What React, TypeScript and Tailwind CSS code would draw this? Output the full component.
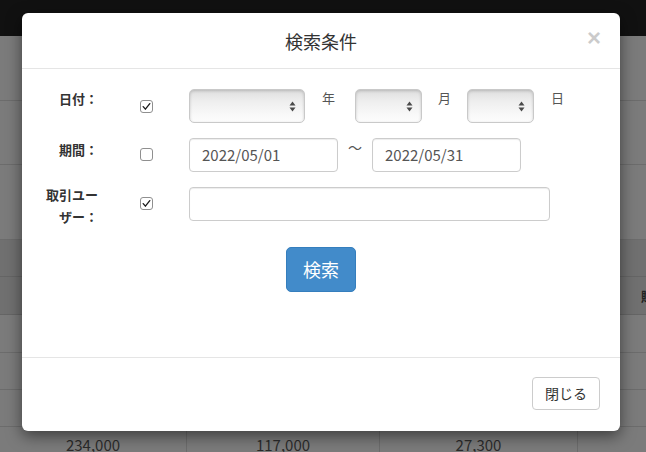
import React from "react";

function Checkbox({ checked }: { checked: boolean }) {
  return (
    <div className="w-[13px] h-[13px] rounded-[3px] border border-[#8f8f8f] bg-white flex items-center justify-center">
      {checked && (
        <svg width="11" height="11" viewBox="0 0 11 11">
          <path d="M2.2 5.6 L4.4 8.2 L8.8 2.6" fill="none" stroke="#1a1a1a" strokeWidth="1.3" strokeLinecap="round" strokeLinejoin="round" />
        </svg>
      )}
    </div>
  );
}

function FakeSelect({ w }: { w: string }) {
  return (
    <div
      className={`${w} relative h-[34px] rounded-[5px] border border-[#c9c9c9] bg-[linear-gradient(to_bottom,#dedede,#eeeeee_35%,#f8f8f8_75%,#fcfcfc)] shadow-[inset_0_1px_3px_rgba(0,0,0,0.18)]`}
    >
      <svg className="absolute right-[8px] top-[11px]" width="7" height="11" viewBox="0 0 7 11">
        <path d="M3.5 0.5 L6.5 4.5 L0.5 4.5 Z" fill="#4a4a4a" />
        <path d="M3.5 10.5 L6.5 6.5 L0.5 6.5 Z" fill="#4a4a4a" />
      </svg>
    </div>
  );
}

function TextInput({ w, value }: { w: string; value?: string }) {
  return (
    <div
      className={`${w} h-[34px] rounded-[4px] border border-[#cccccc] bg-white shadow-[inset_0_1px_1px_rgba(0,0,0,0.075)] flex items-center pl-[12px] text-[15px] text-[#555555]`}
    >
      {value}
    </div>
  );
}

export default function App() {
  return (
    <div className="relative w-[646px] h-[452px] overflow-hidden bg-[#7b7b7b] font-['Noto_Sans_CJK_JP','Noto_Sans',sans-serif]">
      {/* background page under overlay */}
      <div className="h-[36px] bg-[#111111]" />
      <div className="h-[65px] border-b border-[#6c6c6c]" />
      <div className="h-[64px] border-b border-[#6c6c6c]" />
      <div className="h-[75px] border-b border-[#6c6c6c]" />
      <div className="bg-[#707070]">
        <div className="h-[37px] border-b border-[#656565]" />
        <div className="h-[38px] border-b border-[#656565] grid grid-cols-[187px_193px_198px_1fr]">
          <div />
          <div />
          <div />
          <div className="pl-[63px] pt-[11px] text-[13px] font-bold leading-[16px] text-[#222] whitespace-nowrap">賦課</div>
        </div>
      </div>
      <div className="h-[38px] border-b border-[#6c6c6c]" />
      <div className="h-[37px] border-b border-[#6c6c6c]" />
      <div className="h-[37px] border-b border-[#6c6c6c]" />
      <div className="h-[40px] grid grid-cols-[187px_193px_198px_1fr] text-[15px] text-[#2b2b2b]">
        <div className="border-r border-[#6c6c6c] flex justify-center pt-[7px]">234,000</div>
        <div className="border-r border-[#6c6c6c] flex justify-center pt-[7px]">117,000</div>
        <div className="border-r border-[#6c6c6c] flex justify-center pt-[7px]">27,300</div>
        <div />
      </div>

      {/* modal */}
      <div className="absolute left-[22px] top-[13px] w-[598px] h-[418px] bg-white rounded-[6px] shadow-[0_5px_15px_rgba(0,0,0,0.5)] flex flex-col">
        <div className="relative h-[56px] border-b border-[#e5e5e5] flex items-center justify-center">
          <span className="text-[18px] leading-[20px] text-[#333333]">検索条件</span>
          <span className="absolute right-[19px] top-[13px] font-['Liberation_Sans',sans-serif] text-[24px] font-bold leading-[24px] text-[#000000] opacity-20">×</span>
        </div>

        <div className="h-[288px] pt-[20px] flex flex-col">
          {/* row 1 */}
          <div className="h-[34px] flex items-start">
            <div className="ml-[18px] w-[58px] text-right text-[13px] font-bold leading-[20px] text-[#333333]">日付：</div>
            <div className="w-[91px] pl-[42px] pt-[11px]">
              <Checkbox checked />
            </div>
            <FakeSelect w="w-[116px]" />
            <span className="w-[50px] pl-[17px] text-[13px] leading-[18px] text-[#555555]">年</span>
            <FakeSelect w="w-[67px]" />
            <span className="w-[45px] pl-[16px] text-[13px] leading-[18px] text-[#555555]">月</span>
            <FakeSelect w="w-[67px]" />
            <span className="pl-[17px] text-[13px] leading-[18px] text-[#555555]">日</span>
          </div>

          {/* row 2 */}
          <div className="mt-[15px] h-[34px] flex items-start">
            <div className="ml-[18px] w-[58px] pt-[2px] text-right text-[13px] font-bold leading-[20px] text-[#333333]">期間：</div>
            <div className="w-[91px] pl-[42px] pt-[10px]">
              <Checkbox checked={false} />
            </div>
            <TextInput w="w-[149px]" value="2022/05/01" />
            <span className="w-[34px] text-center text-[14px] leading-[18px] text-[#555555]">〜</span>
            <TextInput w="w-[149px]" value="2022/05/31" />
          </div>

          {/* row 3 */}
          <div className="mt-[15px] h-[34px] flex items-start">
            <div className="ml-[18px] w-[58px] -mt-[3px] text-right text-[13px] font-bold leading-[22px] text-[#333333]">取引ユーザー：</div>
            <div className="w-[91px] pl-[42px] pt-[10px]">
              <Checkbox checked />
            </div>
            <TextInput w="w-[361px]" />
          </div>

          <div className="mt-[26px] flex justify-center">
            <div className="w-[70px] h-[45px] rounded-[5px] bg-[#428bca] border border-[#357ebd] flex items-center justify-center text-[18px] text-white">
              検索
            </div>
          </div>
        </div>

        <div className="flex-1 border-t border-[#e5e5e5] flex justify-end items-start pt-[19px] pr-[20px]">
          <div className="w-[68px] h-[33px] rounded-[4px] border border-[#cccccc] bg-white flex items-center justify-center text-[14px] text-[#333333]">
            閉じる
          </div>
        </div>
      </div>
    </div>
  );
}
